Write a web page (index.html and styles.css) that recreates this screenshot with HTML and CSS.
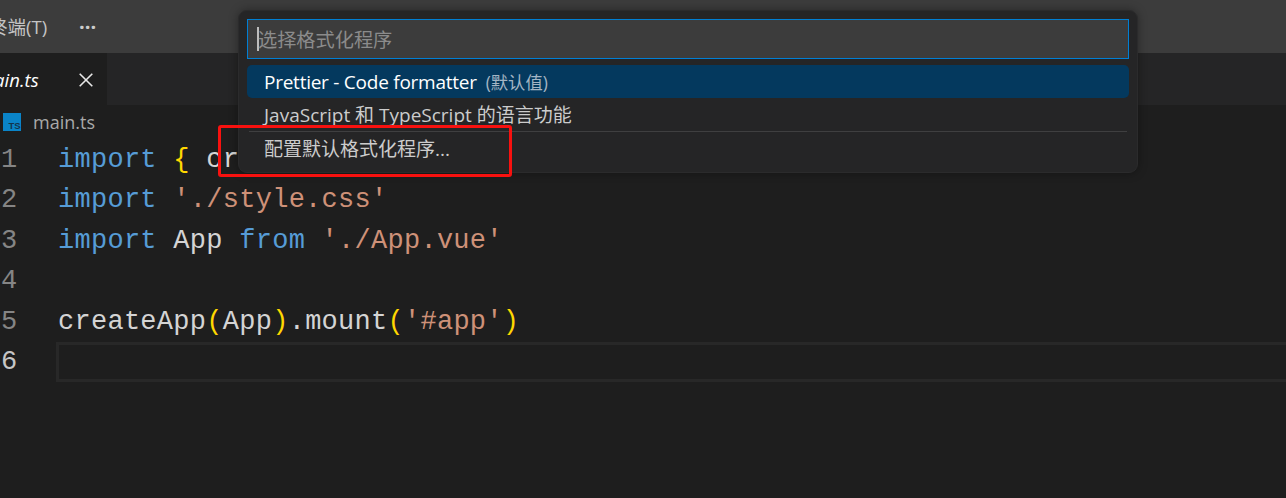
FILE: index.html
```html
<!DOCTYPE html>
<html lang="zh-CN">
<head>
<meta charset="utf-8">
<title>main.ts</title>
<link rel="stylesheet" href="styles.css">
</head>
<body>
<header class="titlebar">
  <span class="menu-item">终端(T)</span>
  <span class="menu-more">···</span>
</header>
<nav class="tabs">
  <div class="tab">
    <span class="tab-name">main.ts</span>
    <svg class="tab-close" width="14" height="14" viewBox="0 0 14 14"><path d="M.7.7 13.3 13.3M13.3.7.7 13.3" stroke="#e8e8e8" stroke-width="1.6" fill="none"/></svg>
  </div>
</nav>
<div class="crumbs">
  <svg class="ts-icon" width="18" height="18" viewBox="0 0 18 18"><rect width="18" height="18" fill="#0a84c8"/><text x="5.5" y="16" class="ts-label">TS</text></svg>
  <span class="crumb-name">main.ts</span>
</div>
<main class="editor">
  <div class="line"><span class="num">1</span><code><span class="kw">import</span> <span class="br">{</span> createApp <span class="br">}</span> <span class="kw">from</span> <span class="str">'vue'</span></code></div>
  <div class="line"><span class="num">2</span><code><span class="kw">import</span> <span class="str">'./style.css'</span></code></div>
  <div class="line"><span class="num">3</span><code><span class="kw">import</span> App <span class="kw">from</span> <span class="str">'./App.vue'</span></code></div>
  <div class="line"><span class="num">4</span><code></code></div>
  <div class="line"><span class="num">5</span><code>createApp<span class="br">(</span>App<span class="br">)</span>.mount<span class="br">(</span><span class="str">'#app'</span><span class="br">)</span></code></div>
  <div class="line current"><span class="num">6</span><code></code></div>
</main>

<section class="quick-pick">
  <div class="qp-input"><span class="caret"></span><span class="placeholder">选择格式化程序</span></div>
  <ul class="qp-list">
    <li class="qp-row selected"><span class="qp-label">Prettier - Code formatter</span><span class="qp-desc">(默认值)</span></li>
    <li class="qp-row">JavaScript 和 TypeScript 的语言功能</li>
    <li class="qp-row separated">配置默认格式化程序...</li>
  </ul>
</section>
<div class="annotation"></div>
</body>
</html>
```
FILE: styles.css
```css
* { box-sizing: border-box; }
html, body { margin: 0; height: 100%; }
body {
  width: 1286px;
  height: 498px;
  overflow: hidden;
  position: relative;
  background: #1e1e1e;
  font-family: "Open Sans", "Noto Sans CJK SC", sans-serif;
  display: flex;
  flex-direction: column;
}
.titlebar {
  height: 53px;
  flex: none;
  background: #3c3c3c;
  display: flex;
  align-items: center;
  color: #c4c4c4;
  font-size: 18.5px;
  overflow: hidden;
  padding-bottom: 1px;
}
.menu-item { margin-left: -11px; white-space: nowrap; }
.menu-more {
  margin-left: 32px;
  font-weight: 700;
  font-size: 20px;
  color: #cccccc;
}
.tabs {
  height: 52px;
  flex: none;
  background: #252526;
  overflow: hidden;
}
.tab {
  width: 107px;
  height: 52px;
  background: #1e1e1e;
  display: flex;
  align-items: center;
  color: #ffffff;
  font-size: 18.5px;
  font-style: italic;
}
.tab-name { margin-left: -22px; width: 101px; flex: none; white-space: nowrap; }
.tab-close { flex: none; margin-top: 2px; }
.crumbs {
  height: 34px;
  flex: none;
  display: flex;
  align-items: center;
  color: #a9a9a9;
  font-size: 18px;
}
.ts-icon { margin-left: 3px; flex: none; }
.ts-label { font: 700 9.5px "Liberation Sans", sans-serif; fill: #12344d; }
.crumb-name { margin-left: 12px; }
.editor {
  flex: 1;
  font-family: "Liberation Mono", monospace;
  font-size: 27px;
  letter-spacing: 0.27px;
  color: #d4d4d4;
  padding-top: 1px;
}
.line {
  height: 40.4px;
  line-height: 40px;
  display: flex;
  white-space: pre;
}
.num { width: 58px; flex: none; padding-left: 1px; color: #858585; }
.line code { font: inherit; flex: 1; }
.current .num { color: #c6c6c6; }
.current code { border: 3px solid #282828; margin: 0 -4px 0 -2px; height: 40px; }
.kw { color: #569cd6; }
.str { color: #ce9178; }
.br { color: #ffd700; }

.quick-pick {
  position: absolute;
  left: 238px;
  top: 10px;
  width: 900px;
  height: 163px;
  background: #252526;
  border-radius: 9px;
  box-shadow: 0 0 10px rgba(0, 0, 0, 0.36);
  padding: 9px;
  border: 1px solid #2b2b2c;
}
.qp-input {
  height: 40px;
  background: #3c3c3c;
  border: 1px solid #007fd4;
  margin: -1px 0 0 -1px;
  width: 882px;
  display: flex;
  align-items: center;
  font-size: 19.2px;
  color: #8b8b8b;
  padding-left: 9px;
}
.caret { width: 2px; height: 24px; background: #bdbdbd; flex: none; margin-right: -1px; }
.qp-list { list-style: none; margin: 6px 0 0 -1px; padding: 0; width: 882px; }
.qp-row {
  height: 33px;
  line-height: 33px;
  padding: 1px 0 0 17px;
  font-size: 19px;
  color: #cccccc;
  border-radius: 5px;
  white-space: nowrap;
}
.qp-row.selected { background: #04395e; color: #ffffff; }
.qp-label { letter-spacing: -0.25px; }
.qp-desc { margin-left: 9px; font-size: 17.3px; color: #a3b5c4; }
.qp-row.separated { border-top: 1px solid #3f3f40; margin: 0 2px; padding-left: 15px; border-radius: 0; height: 34px; }
.annotation {
  position: absolute;
  left: 218px;
  top: 125px;
  width: 294px;
  height: 52px;
  border: 3px solid #f8110f;
  border-radius: 3px;
}
```
